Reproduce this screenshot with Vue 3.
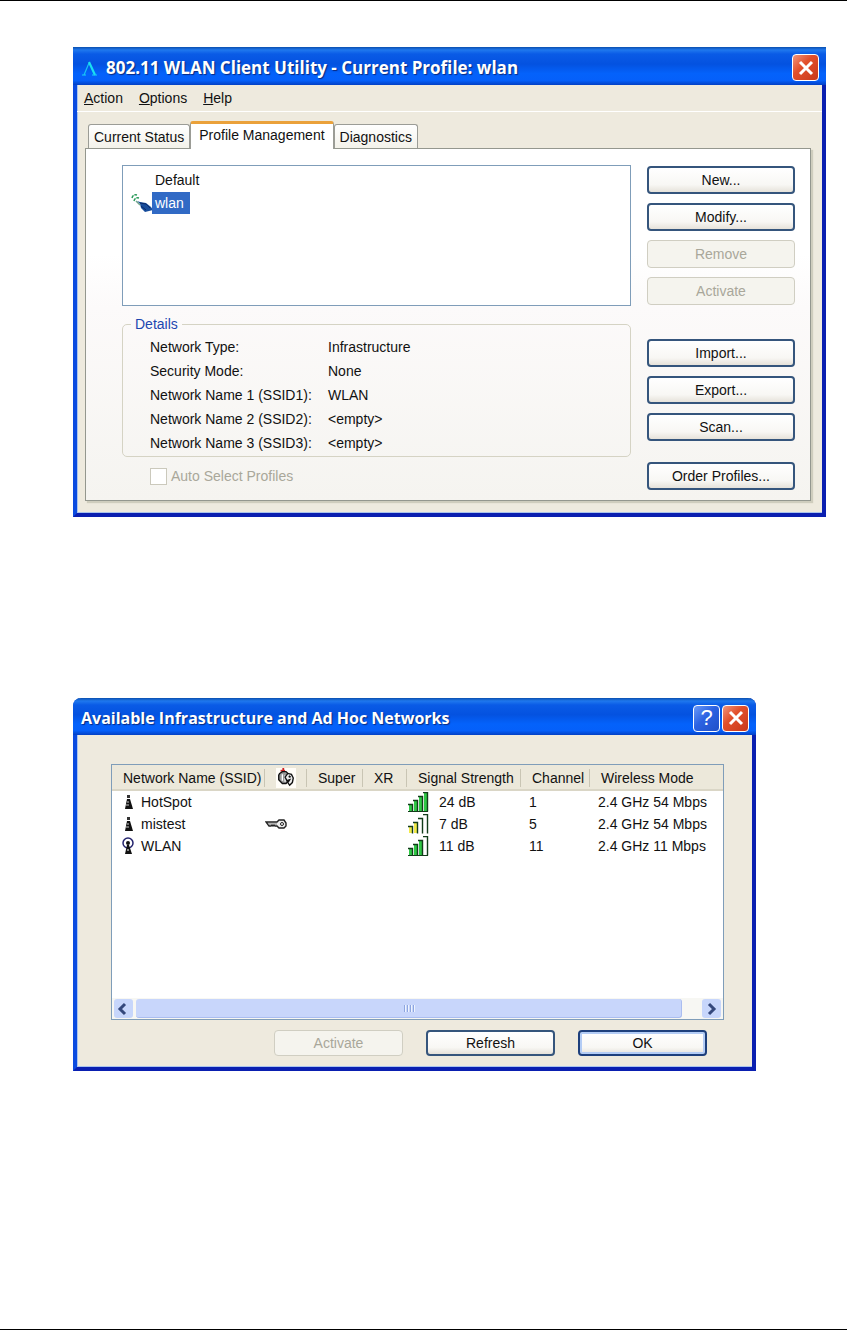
<script setup>
import { ref } from 'vue'

const tabs = ['Current Status', 'Profile Management', 'Diagnostics']
const activeTab = ref('Profile Management')

const profiles = [
	{ name: 'Default', active: false },
	{ name: 'wlan', active: true },
]
const selected = ref('wlan')

const details = [
	['Network Type:', 'Infrastructure'],
	['Security Mode:', 'None'],
	['Network Name 1 (SSID1):', 'WLAN'],
	['Network Name 2 (SSID2):', '<empty>'],
	['Network Name 3 (SSID3):', '<empty>'],
]

const actions = [
	[{ text: 'New...' }, { text: 'Modify...' }, { text: 'Remove', off: true }, { text: 'Activate', off: true }],
	[{ text: 'Import...' }, { text: 'Export...' }, { text: 'Scan...' }],
	[{ text: 'Order Profiles...' }],
]

const networks = [
	{ ssid: 'HotSpot', linked: false, key: false, bars: 4, color: '#2fc845', signal: '24 dB', channel: 1, mode: '2.4 GHz 54 Mbps' },
	{ ssid: 'mistest', linked: false, key: true, bars: 2, color: '#f2ea4a', signal: '7 dB', channel: 5, mode: '2.4 GHz 54 Mbps' },
	{ ssid: 'WLAN', linked: true, key: false, bars: 3, color: '#2fc845', signal: '11 dB', channel: 11, mode: '2.4 GHz 11 Mbps' },
]

function barFill(net, n) {
	return n <= net.bars ? net.color : '#fff'
}
</script>

<template>
	<main class="page">
		<section class="window main-window">
			<header class="titlebar">
				<svg class="logo" width="17" height="18" viewBox="0 0 17 18">
					<path d="M3 16L8 4" fill="none" stroke="#19c3f5" stroke-width="1.2" />
					<path d="M8 3L14 16" fill="none" stroke="#19e0f0" stroke-width="2.2" />
					<path d="M1 16h4M11 16h5" stroke="#19d3f5" stroke-width="1" />
				</svg>
				<h1 class="title">802.11 WLAN Client Utility - Current Profile: wlan</h1>
				<button class="caption close" aria-label="Close">
					<svg width="24" height="24" viewBox="0 0 24 24"><path d="M6 6L18 18M18 6L6 18" stroke="#fff" stroke-width="3" /></svg>
				</button>
			</header>
			<nav class="menu">
				<a href="#"><u>A</u>ction</a>
				<a href="#"><u>O</u>ptions</a>
				<a href="#"><u>H</u>elp</a>
			</nav>
			<div class="client">
				<div class="tabs" role="tablist">
					<button
						v-for="tab in tabs"
						:key="tab"
						role="tab"
						class="tab"
						:class="{ current: tab === activeTab }"
						:aria-selected="tab === activeTab"
						@click="activeTab = tab"
					>{{ tab }}</button>
				</div>
				<div class="panel">
					<div class="left">
						<ul class="profiles">
							<li v-for="p in profiles" :key="p.name" @click="selected = p.name">
								<span class="profile-icon">
									<svg v-if="p.active" width="22" height="20" viewBox="0 0 22 20">
										<path d="M1 5Q2 1 6 2M3 8Q4 4 8 5" fill="none" stroke="#2b9a5a" stroke-width="1.5" stroke-dasharray="3 1" />
										<path d="M6 8L9 11L10 15L14 19L22 17L20 14L15 10L9 9Z" fill="#174d9c" />
										<path d="M9 10L15 11L19 15M10 13L15 17" fill="none" stroke="#0b2a6b" stroke-width="1" />
										<path d="M5 8L9 12" stroke="#73a58c" stroke-width="1.5" />
									</svg>
								</span>
								<span class="profile-name" :class="{ selected: p.name === selected }">{{ p.name }}</span>
							</li>
						</ul>
						<fieldset class="details">
							<legend>Details</legend>
							<dl>
								<template v-for="row in details" :key="row[0]">
									<dt>{{ row[0] }}</dt>
									<dd>{{ row[1] }}</dd>
								</template>
							</dl>
						</fieldset>
						<label class="auto">
							<input type="checkbox" disabled>
							Auto Select Profiles
						</label>
					</div>
					<div class="actions">
						<div v-for="(group, i) in actions" :key="i" class="group">
							<button v-for="a in group" :key="a.text" class="btn" :disabled="a.off">{{ a.text }}</button>
						</div>
					</div>
				</div>
			</div>
		</section>

		<section class="window scan-window">
			<header class="titlebar">
				<h2 class="title small">Available Infrastructure and Ad Hoc Networks</h2>
				<button class="caption help" aria-label="Help">?</button>
				<button class="caption close" aria-label="Close">
					<svg width="24" height="24" viewBox="0 0 24 24"><path d="M6 6L18 18M18 6L6 18" stroke="#fff" stroke-width="3" /></svg>
				</button>
			</header>
			<div class="scan-client">
				<div class="list-view">
					<table>
						<colgroup>
							<col class="c-name"><col class="c-key"><col class="c-super"><col class="c-xr">
							<col class="c-signal"><col class="c-channel"><col>
						</colgroup>
						<thead>
							<tr>
								<th>Network Name (SSID)</th>
								<th class="key-head">
									<svg width="20" height="20" viewBox="0 0 22 22" role="img" aria-label="Security">
										<rect width="22" height="22" fill="#fffdf8" />
										<path d="M5 3h5" stroke="#c22" stroke-width="2" />
										<path d="M8 0v4" stroke="#c22" stroke-width="2" />
										<path d="M4 6L7 4H11L14 7V14L11 17H7L3 13V8Z" fill="#999" stroke="#111" stroke-width="1.5" />
										<path d="M7 7V14M10 8V15" stroke="#fff" stroke-width="1.4" />
										<path d="M10 10L13 6L17 7L19 11L18 16L15 19L13 16L15 13L12 14Z" fill="#eee" stroke="#111" stroke-width="1.5" />
										<path d="M14 9l2 1" stroke="#111" stroke-width="2" />
									</svg>
								</th>
								<th>Super</th>
								<th>XR</th>
								<th>Signal Strength</th>
								<th>Channel</th>
								<th>Wireless Mode</th>
							</tr>
						</thead>
						<tbody>
							<tr v-for="net in networks" :key="net.ssid">
								<td>
									<div class="cell">
										<svg width="14" height="18" viewBox="0 0 14 18">
											<template v-if="net.linked">
												<circle cx="7" cy="6" r="5" fill="#fff" stroke="#24246e" stroke-width="1.5" />
												<circle cx="7" cy="6" r="2" fill="#111" />
												<path d="M6 8h2l3 9H4Z" fill="#111" />
												<path d="M6 13h2" stroke="#fff" stroke-width="1" />
											</template>
											<template v-else>
												<path d="M6 2h3v3H6Z" fill="#333" />
												<path d="M6 6h3l3 10H4Z" fill="#111" />
												<path d="M5 12h3M7 8v2" stroke="#ccc" stroke-width="1" />
											</template>
										</svg>
										{{ net.ssid }}
									</div>
								</td>
								<td>
									<svg v-if="net.key" class="key" width="22" height="12" viewBox="0 0 22 12" role="img" aria-label="Encrypted">
										<path d="M1 4H12L14 2H19L21 5V8L19 10H14L12 8H10L9 7L8 8L7 7L6 8L4 8Z" fill="#eee" stroke="#222" stroke-width="1.4" />
										<path d="M3 6h9" stroke="#777" stroke-width="1" />
										<circle cx="17" cy="6" r="1.5" fill="#fff" stroke="#222" />
									</svg>
								</td>
								<td></td>
								<td></td>
								<td>
									<div class="cell signal">
										<svg width="21" height="20" viewBox="0 0 21 20">
											<g v-for="n in 4" :key="n">
												<rect :x="n * 5 - 4" :y="16 - n * 4" width="4" :height="n * 4 + 3" :fill="barFill(net, n)" />
												<path :d="`M${n * 5 - 5} ${16.5 - n * 4}h4.5V19.5`" fill="none" stroke="#123c1a" stroke-width="1.4" />
											</g>
											<path v-if="net.bars > 2" d="M0 19.5h20" stroke="#123c1a" />
										</svg>
										{{ net.signal }}
									</div>
								</td>
								<td class="channel">{{ net.channel }}</td>
								<td class="mode">{{ net.mode }}</td>
							</tr>
						</tbody>
					</table>
					<div class="scrollbar">
						<button class="arrow" aria-label="Scroll left">
							<svg width="18" height="18" viewBox="0 0 18 18"><path d="M11 4L6 9L11 14" fill="none" stroke="#34487c" stroke-width="3" /></svg>
						</button>
						<div class="thumb"><i></i><i></i><i></i><i></i></div>
						<button class="arrow" aria-label="Scroll right">
							<svg width="18" height="18" viewBox="0 0 18 18"><path d="M7 4L12 9L7 14" fill="none" stroke="#34487c" stroke-width="3" /></svg>
						</button>
					</div>
				</div>
				<footer class="footer">
					<button class="btn" disabled>Activate</button>
					<button class="btn">Refresh</button>
					<button class="btn default">OK</button>
				</footer>
			</div>
		</section>
	</main>
</template>

<style>
body {
	margin: 0;
	background: #fff;
}
</style>

<style scoped>
.page {
	box-sizing: border-box;
	min-height: 100vh;
	padding: 46px 21px 46px 73px;
	border-top: 1px solid #000;
	border-bottom: 1px solid #000;
	color: #111;
	font-family: 'Liberation Sans', Arial, sans-serif;
	font-size: 14px;
	line-height: 18px;
}

button {
	font: inherit;
	color: inherit;
	padding: 0;
}

.window {
	display: flex;
	flex-direction: column;
	box-sizing: border-box;
	background: #eeeade;
	border: 4px solid #0a1fb0;
	border-top: 0;
	border-left-color: #0b4be0;
	box-shadow: inset 1px -1px 0 #a9c4ee;
}

.scan-window {
	margin-top: 181px;
	margin-right: 70px;
	border-radius: 8px 8px 0 0;
}

.titlebar {
	display: flex;
	align-items: center;
	gap: 2px;
	height: 38px;
	margin: 0 -4px;
	padding: 3px 7px 0 8px;
	box-sizing: border-box;
	background: linear-gradient(#0b4fae 0, #1f78ee 3px, #0a5be6 7px, #0452e0 45%, #0462fb 70%, #0560fa 88%, #0340c4 100%);
}

.scan-window .titlebar {
	border-radius: 8px 8px 0 0;
	height: 37px;
}

.title {
	flex: 1;
	margin: 0;
	color: #fff;
	font-family: 'Open Sans', 'Noto Sans', sans-serif;
	font-size: 17px;
	font-weight: 700;
	line-height: 24px;
	white-space: nowrap;
	text-shadow: 1px 1px 1px #0a2a80;
}

.title.small {
	font-size: 16px;
}

.logo {
	margin-right: 6px;
}

.caption {
	display: flex;
	align-items: center;
	justify-content: center;
	box-sizing: border-box;
	width: 27px;
	height: 27px;
	border: 1px solid #fff;
	border-radius: 4px;
	color: #fff;
}

.close {
	background: linear-gradient(135deg, #f0957c, #e2502c 40%, #c8381a);
}

.help {
	background: linear-gradient(135deg, #6a9af8, #2b62e2 45%, #2050c8);
	font-size: 22px;
}

.menu {
	display: flex;
	gap: 16px;
	padding: 4px 7px;
	border-bottom: 1px solid #fff;
}

.menu a {
	color: inherit;
	text-decoration: none;
}

.client {
	padding: 9px 11px 12px 8px;
}

.tabs {
	display: flex;
	align-items: flex-end;
	padding: 0 3px;
}

.tab {
	height: 24px;
	padding: 0 5px;
	border: 1px solid #9b9c96;
	border-bottom: 0;
	border-radius: 3px 3px 0 0;
	background: linear-gradient(#fff, #f3f2ea);
}

.tab.current {
	height: 28px;
	margin-bottom: -1px;
	padding: 0 8px 4px;
	border-top: 3px solid #eaa13a;
	background: #fff;
	position: relative;
}

.panel {
	display: flex;
	gap: 16px;
	padding: 16px 15px 10px 36px;
	border: 1px solid #94978e;
	background: linear-gradient(#fff 30%, #fcfafa 45%, #f5f4f0);
	box-shadow: 2px 2px 1px #cfcdbd;
}

.left {
	display: flex;
	flex-direction: column;
	flex: 1;
	gap: 9px;
}

.profiles {
	box-sizing: border-box;
	min-height: 141px;
	margin: 0;
	padding: 2px 8px;
	border: 1px solid #7f9db9;
	background: #fff;
	list-style: none;
}

.profiles li {
	display: flex;
	align-items: center;
	height: 23px;
}

.profile-icon {
	width: 21px;
	height: 20px;
}

.profile-icon svg {
	display: block;
}

.profile-name {
	padding: 2px 3px;
}

.profile-name.selected {
	padding: 2px 6px 2px 3px;
	background: #316ac5;
	color: #fff;
}

.details {
	margin: 0;
	padding: 2px 0 1px 27px;
	border: 1px solid #d5d3c4;
	border-radius: 5px;
}

.details legend {
	margin-left: -19px;
	padding: 0 4px;
	color: #1d46b0;
}

.details dl {
	display: grid;
	grid-template-columns: 178px 1fr;
	margin: 0;
	line-height: 24px;
}

.details dd {
	margin: 0;
}

.auto {
	display: flex;
	align-items: center;
	gap: 4px;
	padding-left: 28px;
	height: 20px;
	color: #a9a79a;
}

.auto input {
	appearance: none;
	box-sizing: border-box;
	width: 17px;
	height: 17px;
	margin: 0;
	border: 1px solid #cbc9bc;
	background: #fff;
}

.actions {
	display: flex;
	flex-direction: column;
	width: 148px;
	padding-top: 1px;
}

.group {
	display: flex;
	flex-direction: column;
	gap: 9px;
}

.group:nth-child(2) {
	margin: 34px 0 21px;
}

.btn {
	height: 28px;
	border: 2px solid #35557c;
	border-radius: 4px;
	background: linear-gradient(#fff, #f8f7f4 70%, #e6e2da);
	color: #111;
}

.btn:disabled {
	border: 1px solid #d0cec2;
	background: #f5f4ee;
	color: #a9a79a;
}

.scan-client {
	padding: 29px 28px 11px 34px;
}

.list-view {
	display: flex;
	flex-direction: column;
	min-height: 254px;
	border: 1px solid #7f9db9;
	background: #fff;
}

table {
	width: 100%;
	table-layout: fixed;
	border-collapse: collapse;
	white-space: nowrap;
}

.c-name { width: 153px; }
.c-key { width: 42px; }
.c-super { width: 56px; }
.c-xr { width: 44px; }
.c-signal { width: 114px; }
.c-channel { width: 69px; }

th {
	height: 26px;
	padding: 0 0 0 11px;
	background: #ece8da;
	box-shadow: inset 0 -2px 0 #dad6c6;
	font-weight: 400;
	text-align: left;
}

th:not(:last-child) {
	background: linear-gradient(270deg, #c9c5b4 0 1px, transparent 1px) 0 4px / 100% 18px no-repeat, #ece8da;
}

th svg {
	display: block;
}

td {
	height: 22px;
	padding: 0;
}

.cell {
	display: flex;
	align-items: center;
	gap: 6px;
	padding-left: 9px;
}

.cell.signal {
	gap: 10px;
	padding-left: 1px;
}

.key {
	display: block;
}

.channel,
.mode {
	padding-left: 8px;
}

.scrollbar {
	display: flex;
	align-items: center;
	gap: 3px;
	margin-top: auto;
	padding: 1px 2px;
	background: #f7f7f3;
}

.arrow {
	width: 19px;
	height: 19px;
	border: 0;
	border-radius: 3px;
	background: #c7d6fb;
}

.arrow svg {
	display: block;
}

.thumb {
	display: flex;
	flex: 1;
	align-items: center;
	justify-content: center;
	gap: 2px;
	height: 18px;
	margin-right: 17px;
	border-right: 1px solid #aabdf0;
	border-bottom: 1px solid #aabdf0;
	border-radius: 3px;
	background: #c8d6fb;
}

.thumb i {
	width: 1px;
	height: 7px;
	background: #8ea6df;
	box-shadow: 1px 0 0 #eef4fe;
}

.footer {
	display: flex;
	justify-content: flex-end;
	gap: 23px;
	padding: 10px 17px 0 0;
}

.footer .btn {
	width: 129px;
	height: 26px;
}

.btn.default {
	border-color: #1d3f7c;
	box-shadow: inset 0 0 0 2px #b3ccf5;
}
</style>
